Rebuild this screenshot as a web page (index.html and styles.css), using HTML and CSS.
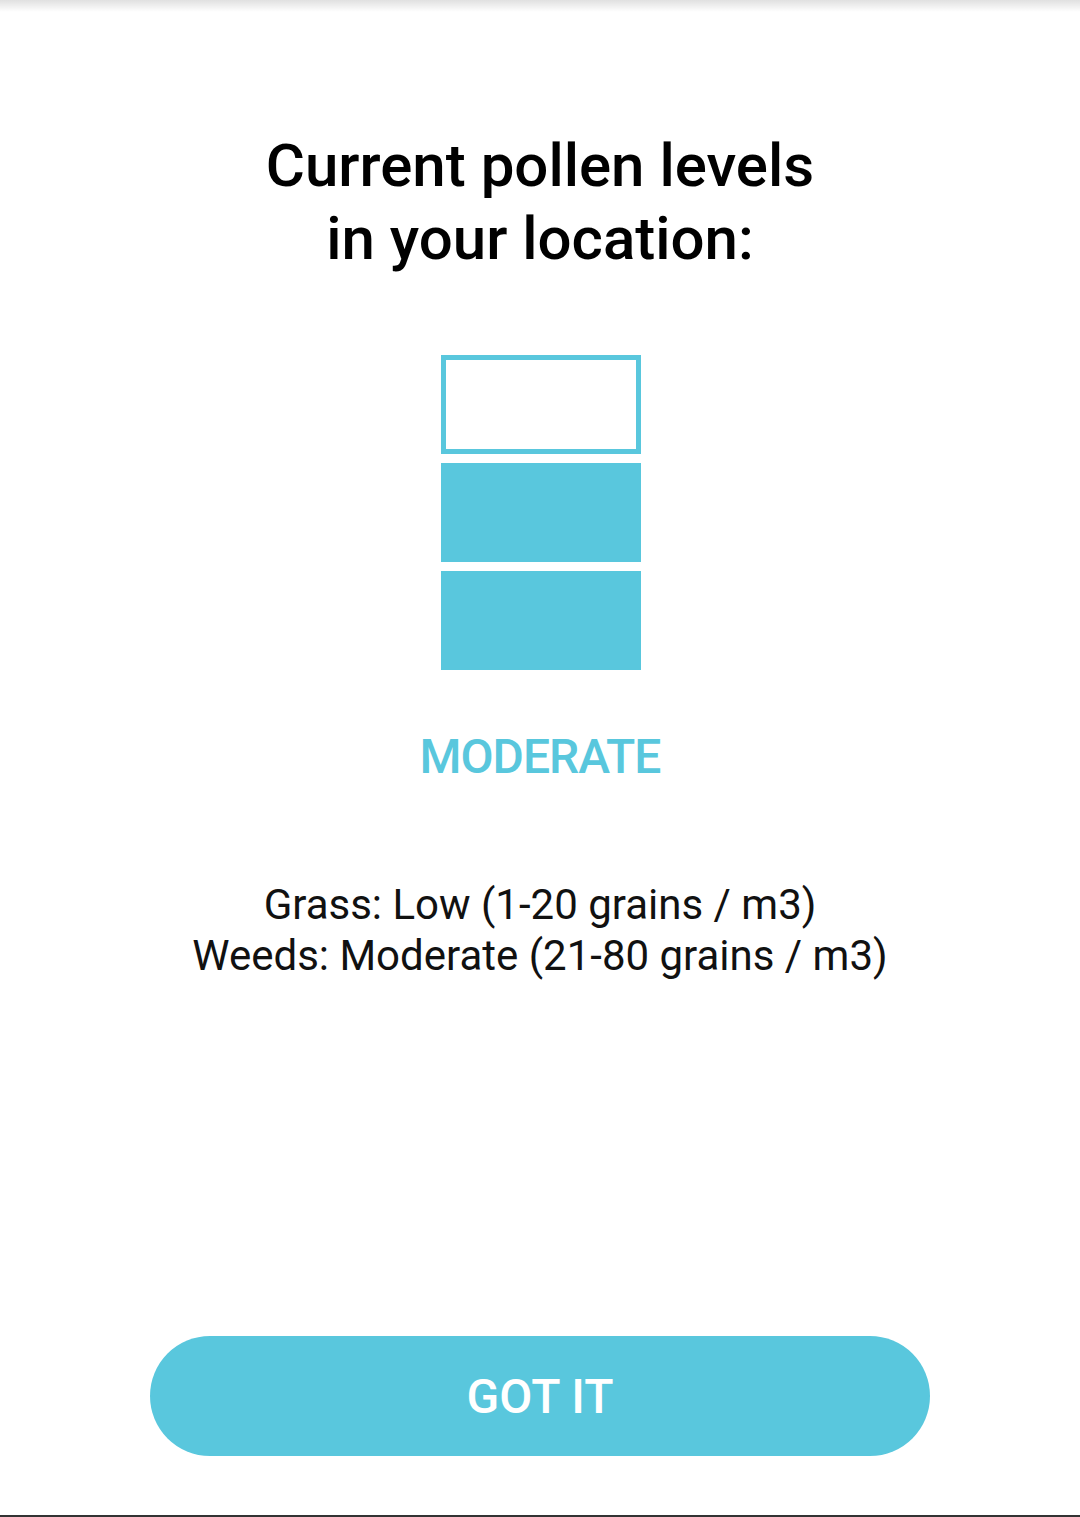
FILE: index.html
```html
<!DOCTYPE html>
<html>
<head>
<meta charset="utf-8">
<link rel="stylesheet" href="styles.css">
</head>
<body>
<div class="screen">
  <div class="top-shadow"></div>
  <h1 class="title">Current pollen levels<br>in your location:</h1>
  <div class="meter">
    <div class="bar bar-empty"></div>
    <div class="bar bar-full"></div>
    <div class="bar bar-full"></div>
  </div>
  <div class="level">MODERATE</div>
  <div class="details">
    <div>Grass: Low (1-20 grains / m3)</div>
    <div>Weeds: Moderate (21-80 grains / m3)</div>
  </div>
  <div class="spacer"></div>
  <button class="got-it">GOT IT</button>
  <div class="bottom-line"></div>
</div>
</body>
</html>
```
FILE: styles.css
```css
html, body {
  margin: 0;
  padding: 0;
  background: #ffffff;
}
.screen {
  position: relative;
  width: 1080px;
  height: 1517px;
  display: flex;
  flex-direction: column;
  align-items: center;
  font-family: Roboto, "Liberation Sans", sans-serif;
  overflow: hidden;
}
.top-shadow {
  position: absolute;
  top: 0;
  left: 0;
  right: 0;
  height: 12px;
  background: linear-gradient(to bottom, rgba(0,0,0,0.12), rgba(0,0,0,0));
}
.title {
  margin: 129px 0 0 0;
  font-size: 60px;
  font-weight: 500;
  line-height: 73px;
  color: #000;
  text-align: center;
}
.meter {
  margin-top: 80px;
  margin-left: 2px;
  display: flex;
  flex-direction: column;
  gap: 9px;
}
.bar {
  width: 200px;
  height: 99px;
  box-sizing: border-box;
}
.bar-empty {
  border: 5px solid #59c7dd;
  background: #fff;
}
.bar-full {
  background: #59c7dd;
}
.level {
  margin-top: 57px;
  font-size: 48px;
  letter-spacing: -1px;
  font-weight: 500;
  color: #59c7dd;
  line-height: 60px;
}
.details {
  margin-top: 92px;
  font-size: 42px;
  line-height: 51px;
  color: #111;
  text-align: center;
}
.spacer {
  flex: 1;
}
.got-it {
  width: 780px;
  height: 120px;
  border: none;
  border-radius: 60px;
  background: #59c7dd;
  color: #fff;
  font-family: Roboto, "Liberation Sans", sans-serif;
  font-size: 48px;
  font-weight: 500;
  margin-bottom: 61px;
  padding: 0;
}
.bottom-line {
  position: absolute;
  left: 0;
  right: 0;
  bottom: 0;
  height: 2px;
  background: #333;
}
```
